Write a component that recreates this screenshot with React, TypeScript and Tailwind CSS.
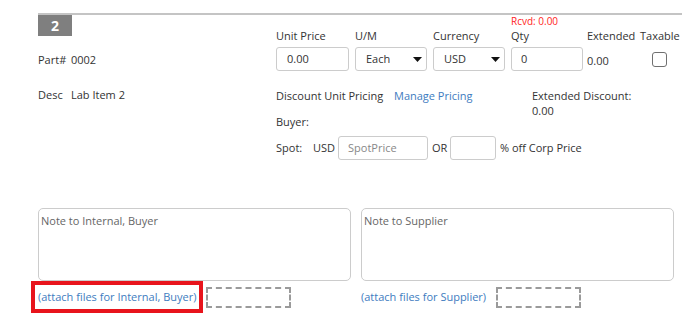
import React from "react";

// Small dropdown-looking box with a filled caret
function FakeSelect({ value }: { value: string }) {
  return (
    <div className="mt-[4px] flex h-[24px] items-center justify-between rounded-[3px] border border-[#cccccc] pl-[10px] pr-[4px] leading-[22px]">
      <span>{value}</span>
      <svg width="9" height="5" viewBox="0 0 9 5">
        <polygon points="0,0 9,0 4.5,5" fill="#111" />
      </svg>
    </div>
  );
}

function NoteBox({ placeholder, link, highlight }: { placeholder: string; link: string; highlight?: boolean }) {
  return (
    <div className="w-[313px]">
      <div className="h-[73px] rounded-[5px] border border-[#cccccc] pl-[2px] pt-[4px] leading-[15px] text-[#666]">
        {placeholder}
      </div>
      <div className="relative flex h-[32px] items-center">
        {highlight && (
          <div className="absolute left-[-7px] top-0 h-[32px] w-[172px] border-4 border-[#e8141c]" />
        )}
        <span className="text-[#3e7cc0]">{link}</span>
        <div className="ml-[10px] h-[21px] w-[85px] border-2 border-dashed border-[#9a9a9a]" />
      </div>
    </div>
  );
}

export default function App() {
  return (
    <div className="h-[327px] w-[688px] overflow-hidden bg-white pl-[38px] pt-[13px] font-['Open_Sans',sans-serif] text-[11px] text-[#333]">
      {/* line header */}
      <div className="h-[2px] w-[644px] bg-[#c4c4c4]" />

      <div className="flex">
        {/* part info */}
        <div className="w-[238px]">
          <div className="h-[21px] w-[34px] bg-[#7f7f7f] text-center text-[14px] font-bold leading-[21px] text-white">
            2
          </div>
          <div className="mt-[16px] flex leading-[15px]">
            <span className="w-[33px]">Part#</span>
            <span>0002</span>
          </div>
          <div className="mt-[20px] flex leading-[15px]">
            <span className="w-[33px]">Desc</span>
            <span>Lab Item 2</span>
          </div>
        </div>

        {/* pricing */}
        <div>
          <div className="flex items-start">
            <div className="w-[73px] pt-[13px]">
              <div className="leading-[15px]">Unit Price</div>
              <div className="mt-[4px] h-[24px] rounded-[3px] border border-[#cccccc] px-[10px] leading-[22px]">0.00</div>
            </div>
            <div className="ml-[6px] w-[72px] pt-[13px]">
              <div className="leading-[15px]">U/M</div>
              <FakeSelect value="Each" />
            </div>
            <div className="ml-[6px] w-[72px] pt-[13px]">
              <div className="leading-[15px]">Currency</div>
              <FakeSelect value="USD" />
            </div>
            <div className="ml-[6px] w-[72px]">
              <div className="text-[10px] leading-[13px] text-[#ff2424]">Rcvd: 0.00</div>
              <div className="leading-[15px]">Qty</div>
              <div className="mt-[4px] h-[24px] rounded-[3px] border border-[#cccccc] px-[9px] leading-[22px]">0</div>
            </div>
            <div className="ml-[4px] w-[53px] pt-[13px]">
              <div className="leading-[15px]">Extended</div>
              <div className="mt-[10px] leading-[15px]">0.00</div>
            </div>
            <div className="flex flex-col items-center pt-[13px]">
              <div className="leading-[15px]">Taxable</div>
              <div className="mt-[9px] h-[15px] w-[15px] rounded-[3px] border border-[#707070]" />
            </div>
          </div>

          <div className="mt-[17px] flex leading-[15px]">
            <div className="w-[256px]">
              <div className="flex">
                <span className="w-[118px]">Discount Unit Pricing</span>
                <span className="text-[#3e7cc0]">Manage Pricing</span>
              </div>
              <div className="mt-[11px]">Buyer:</div>
            </div>
            <div>
              <div>Extended Discount:</div>
              <div>0.00</div>
            </div>
          </div>

          <div className="mt-[7px] flex h-[24px] items-center">
            <span className="w-[37px]">Spot:</span>
            <span className="w-[25px]">USD</span>
            <div className="h-[24px] w-[90px] rounded-[3px] border border-[#cccccc] px-[9px] leading-[22px] text-[#888]">
              SpotPrice
            </div>
            <span className="ml-[4px] w-[18px]">OR</span>
            <div className="h-[24px] w-[46px] rounded-[3px] border border-[#cccccc]" />
            <span className="ml-[4px]">% off Corp Price</span>
          </div>
        </div>
      </div>

      {/* notes */}
      <div className="mt-[48px] flex gap-[10px]">
        <NoteBox placeholder="Note to Internal, Buyer" link="(attach files for Internal, Buyer)" highlight />
        <NoteBox placeholder="Note to Supplier" link="(attach files for Supplier)" />
      </div>
    </div>
  );
}
